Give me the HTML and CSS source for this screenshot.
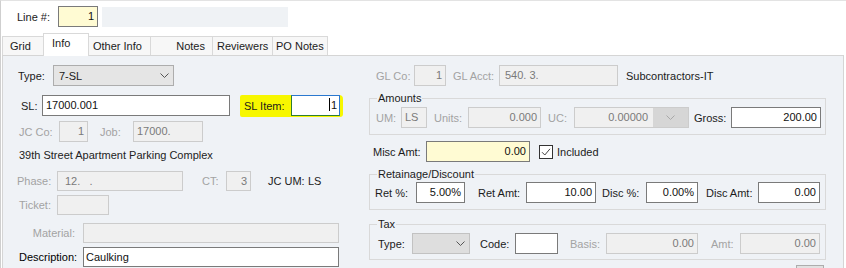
FILE: index.html
```html
<!DOCTYPE html>
<html lang="en">
<head>
    <meta charset="UTF-8">
    <title>SL Line - Info</title>
    <link rel="stylesheet" href="styles.css">
</head>
<body>
<div class="window">
    <div class="topbar">
        <span class="lbl l-line">Line #:</span>
        <div class="box yellow num b-line">1</div>
        <div class="line-desc"></div>
    </div>

    <div class="tabs">
        <div class="tab t-grid">Grid</div>
        <div class="tab active t-info">Info</div>
        <div class="tab t-other">Other Info</div>
        <div class="tab t-notes">Notes</div>
        <div class="tab t-rev">Reviewers</div>
        <div class="tab t-po">PO Notes</div>
    </div>

    <div class="panel">
        <div class="col-left">
            <div class="row r-type">
                <span class="lbl l-type">Type:</span>
                <div class="select s-type">
                    <span>7-SL</span>
                    <svg width="9" height="5" viewBox="0 0 9 5"><path d="M0.5 0.5 L4.5 4.5 L8.5 0.5" fill="none" stroke="#555" stroke-width="1"/></svg>
                </div>
            </div>
            <div class="row r-sl">
                <span class="lbl l-sl">SL:</span>
                <div class="box b-sl">17000.001</div>
                <div class="highlight">
                    <span class="lbl l-slitem">SL Item:</span>
                    <div class="box num focus b-slitem"><span class="caret"></span>1</div>
                </div>
            </div>
            <div class="row r-jc">
                <span class="lbl off l-jcco">JC Co:</span>
                <div class="box off num b-jcco">1</div>
                <span class="lbl off l-job">Job:</span>
                <div class="box off b-job">17000.</div>
            </div>
            <div class="row r-proj">39th Street Apartment Parking Complex</div>
            <div class="row r-phase">
                <span class="lbl off l-phase">Phase:</span>
                <div class="box off b-phase">12.&nbsp;&nbsp;&nbsp;.</div>
                <span class="lbl off l-ct">CT:</span>
                <div class="box off num b-ct">3</div>
                <span class="lbl l-jcum">JC UM:</span>
                <span>LS</span>
            </div>
            <div class="row r-ticket">
                <span class="lbl off l-ticket">Ticket:</span>
                <div class="box off b-ticket"></div>
            </div>
            <div class="row r-mat">
                <span class="lbl off l-mat">Material:</span>
                <div class="box off b-wide"></div>
            </div>
            <div class="row r-desc">
                <span class="lbl l-desc">Description:</span>
                <div class="box b-wide">Caulking</div>
            </div>
        </div>

        <div class="col-right">
            <div class="row r-gl">
                <span class="lbl off l-glco">GL Co:</span>
                <div class="box off num b-glco">1</div>
                <span class="lbl off l-glacct">GL Acct:</span>
                <div class="box off b-glacct">540. 3.</div>
                <span class="gl-desc">Subcontractors-IT</span>
            </div>

            <fieldset class="group g-amounts">
                <legend>Amounts</legend>
                <div class="row">
                    <span class="lbl off l-um">UM:</span>
                    <div class="box off b-um">LS</div>
                    <span class="lbl off l-units">Units:</span>
                    <div class="box off num b-units">0.000</div>
                    <span class="lbl off l-uc">UC:</span>
                    <div class="combo off b-uc">
                        <span class="combo-val">0.00000</span>
                        <span class="combo-btn">
                            <svg width="9" height="5" viewBox="0 0 9 5"><path d="M0.5 0.5 L4.5 4.5 L8.5 0.5" fill="none" stroke="#a8a8a8" stroke-width="1"/></svg>
                        </span>
                    </div>
                    <span class="lbl l-gross">Gross:</span>
                    <div class="box num b-gross">200.00</div>
                </div>
            </fieldset>

            <div class="row r-misc">
                <span class="lbl l-misc">Misc Amt:</span>
                <div class="box yellow num b-misc">0.00</div>
                <span class="check">
                    <svg width="14" height="14" viewBox="0 0 14 14"><rect x="0.5" y="0.5" width="13" height="13" fill="#fff" stroke="#333"/><path d="M3 7.2 L5.8 10 L11 3.8" fill="none" stroke="#444" stroke-width="1"/></svg>
                </span>
                <span class="check-text">Included</span>
            </div>

            <fieldset class="group g-ret">
                <legend>Retainage/Discount</legend>
                <div class="row">
                    <span class="lbl l-retpct">Ret %:</span>
                    <div class="box num b-retpct">5.00%</div>
                    <span class="lbl l-retamt">Ret Amt:</span>
                    <div class="box num b-retamt">10.00</div>
                    <span class="lbl l-discpct">Disc %:</span>
                    <div class="box num b-discpct">0.00%</div>
                    <span class="lbl l-discamt">Disc Amt:</span>
                    <div class="box num b-discamt">0.00</div>
                </div>
            </fieldset>

            <fieldset class="group g-tax">
                <legend>Tax</legend>
                <div class="row">
                    <span class="lbl l-taxtype">Type:</span>
                    <div class="select s-tax">
                        <span></span>
                        <svg width="9" height="5" viewBox="0 0 9 5"><path d="M0.5 0.5 L4.5 4.5 L8.5 0.5" fill="none" stroke="#555" stroke-width="1"/></svg>
                    </div>
                    <span class="lbl l-code">Code:</span>
                    <div class="box b-code"></div>
                    <span class="lbl off l-basis">Basis:</span>
                    <div class="box off num b-basis">0.00</div>
                    <span class="lbl off l-amt">Amt:</span>
                    <div class="box off num b-amt">0.00</div>
                </div>
            </fieldset>

            <div class="row r-more">
                <div class="more-btn"></div>
            </div>
        </div>
    </div>
</div>
</body>
</html>
```

FILE: styles.css
```css
body {
    margin: 0;
    background-color: #fff;
    font-family: 'Liberation Sans', Arial, sans-serif;
    font-size: 11px;
    color: #1b1b1b;
    width: 846px;
    height: 268px;
    overflow: hidden;
}
.window {
    border-left: 1px solid #cfcfcf;
    border-top: 1px solid #e3e3e3;
    height: 267px;
    overflow: hidden;
}

/* top line */
.topbar {
    display: flex;
    align-items: center;
    padding: 5px 0 6px 16px;
}
.line-desc {
    width: 186px;
    height: 20px;
    margin-left: 4px;
    background-color: #eff2f5;
}

/* tabs */
.tabs {
    display: flex;
    align-items: flex-end;
    height: 22px;
    margin-left: 1px;
    position: relative;
    z-index: 1;
}
.tab {
    box-sizing: border-box;
    height: 19px;
    line-height: 18px;
    background-color: #f7f7f7;
    border-top: 1px solid #d9d9d9;
    border-right: 1px solid #d9d9d9;
    white-space: nowrap;
}
.tab.active {
    height: 23px;
    margin-bottom: -1px;
    line-height: 19px;
    background-color: #fff;
    border-left: 1px solid #d9d9d9;
    margin-left: -1px;
}
.t-grid { width: 42px; padding-left: 7px; border-left: 1px solid #d9d9d9; }
.t-info { width: 46px; padding-left: 8px; }
.t-other { width: 62px; padding-left: 4px; }
.t-notes { width: 62px; padding-right: 7px; text-align: right; }
.t-rev { width: 60px; padding-left: 4px; }
.t-po { width: 55px; padding-left: 3px; }

/* main panel */
.panel {
    box-sizing: border-box;
    display: flex;
    width: 842px;
    height: 213px;
    margin-left: 1px;
    padding-top: 9px;
    background-color: #eff2f6;
    border: 1px solid #d5d5d5;
    border-bottom: none;
}
.col-left {
    box-sizing: border-box;
    width: 366px;
    padding-left: 14px;
}
.col-right {
    width: 457px;
}

.row {
    display: flex;
    align-items: center;
    height: 21px;
    white-space: nowrap;
}
.lbl {
    box-sizing: border-box;
    flex: none;
    white-space: nowrap;
}
.lbl.off {
    color: #a3a3a3;
}

/* fields */
.box {
    box-sizing: border-box;
    flex: none;
    height: 21px;
    line-height: 19px;
    padding: 0 3px;
    background-color: #fff;
    border: 1px solid #7a7a7a;
    color: #111;
    overflow: hidden;
    white-space: nowrap;
}
.box.num {
    text-align: right;
}
.box.off {
    background-color: #f0f0f0;
    border-color: #cccccc;
    color: #7a7a7a;
}
.box.yellow {
    background-color: #fffbd3;
}
.box.focus {
    border-color: #2a78cf #2a78cf #2e7d32 #2e7d32;
    padding-right: 2px;
}
.caret {
    display: inline-block;
    width: 1px;
    height: 13px;
    margin-right: 1px;
    vertical-align: -2px;
    background-color: #000;
}
.select {
    box-sizing: border-box;
    flex: none;
    display: flex;
    align-items: center;
    justify-content: space-between;
    height: 21px;
    padding: 0 4px 0 5px;
    background-color: #e5e5e5;
    border: 1px solid #adadad;
}
.combo {
    box-sizing: border-box;
    flex: none;
    display: flex;
    height: 21px;
    background-color: #f0f0f0;
    border: 1px solid #cccccc;
    color: #7a7a7a;
}
.combo-val {
    flex: 1;
    line-height: 19px;
    text-align: right;
    padding-right: 5px;
}
.combo-btn {
    display: flex;
    align-items: center;
    justify-content: center;
    width: 35px;
    background-color: #d6d6d6;
}

/* left column */
.b-line { width: 40px; }
.l-line { width: 41px; }
.l-type { width: 36px; padding-left: 1px; }
.s-type { width: 121px; }
.r-sl { margin-top: 9px; }
.l-sl { width: 25px; padding-left: 4px; }
.b-sl { width: 188px; }
.highlight {
    display: flex;
    align-items: center;
    width: 103px;
    height: 22px;
    margin-left: 10px;
    padding-left: 4px;
    box-sizing: border-box;
    background-color: #f7f700;
    border-radius: 2px 4px 3px 2px;
}
.l-slitem { width: 47px; }
.b-slitem { width: 49px; }
.r-jc { margin-top: 5px; }
.l-jcco { width: 42px; padding-left: 2px; }
.b-jcco { width: 29px; }
.l-job { width: 33px; margin-left: 12px; }
.b-job { width: 70px; text-align: left; }
.r-proj { margin-top: 5px; height: 16px; padding-left: 2px; color: #222; }
.r-phase { margin-top: 8px; height: 20px; }
.r-phase .box { height: 20px; }
.l-phase { width: 40px; }
.b-phase { width: 126px; padding-left: 7px; }
.l-ct { width: 24px; margin-left: 19px; }
.b-ct { width: 25px; }
.l-jcum { width: 40px; margin-left: 17px; }
.r-ticket { margin-top: 4px; height: 20px; }
.r-ticket .box { height: 20px; }
.l-ticket { width: 40px; padding-left: 2px; }
.b-ticket { width: 52px; }
.r-mat { margin-top: 8px; height: 20px; }
.r-desc { margin-top: 4px; height: 20px; }
.r-mat .box, .r-desc .box { height: 20px; }
.l-mat { width: 66px; padding-right: 8px; text-align: right; }
.l-desc { width: 66px; padding-left: 2px; color: #000; }
.b-wide { width: 256px; padding-left: 2px; }

/* right column */
.l-glco { width: 45px; padding-left: 7px; }
.b-glco { width: 32px; }
.l-glacct { width: 46px; margin-left: 7px; }
.b-glacct { width: 119px; padding-left: 5px; }
.gl-desc { margin-left: 8px; }

.group {
    margin: 0;
    padding: 0;
    border: 1px solid #d9d9d9;
    min-width: 0;
}
.group legend {
    margin-left: 7px;
    padding: 0 1px;
    line-height: 14px;
    color: #1b1b1b;
}
.g-amounts { margin-top: 5px; padding: 2px 0 6px; }
.g-ret { margin-top: 5px; padding: 1px 0 6px; }
.g-tax { margin-top: 7px; padding: 2px 0 5px; }

.l-um { width: 31px; padding-left: 6px; }
.b-um { width: 26px; padding-left: 3px; }
.l-units { width: 34px; margin-left: 7px; }
.b-units { width: 73px; }
.l-uc { width: 26px; margin-left: 7px; }
.b-uc { width: 115px; }
.l-gross { width: 37px; margin-left: 5px; }
.b-gross { width: 90px; }

.r-misc { margin-top: 6px; }
.l-misc { width: 57px; padding-left: 4px; }
.b-misc { width: 104px; }
.check { display: flex; margin-left: 9px; }
.check-text { margin-left: 4px; }

.l-retpct { width: 46px; padding-left: 5px; }
.b-retpct { width: 49px; }
.l-retamt { width: 48px; margin-left: 13px; }
.b-retamt { width: 70px; }
.l-discpct { width: 44px; margin-left: 6px; }
.b-discpct { width: 52px; }
.l-discamt { width: 52px; margin-left: 8px; }
.b-discamt { width: 62px; }

.l-taxtype { width: 42px; padding-left: 8px; }
.s-tax {
    width: 58px;
    background-color: #dedede;
    border-color: #c2c2c2;
}
.l-code { width: 35px; margin-left: 10px; }
.b-code { width: 43px; }
.l-basis { width: 36px; margin-left: 12px; }
.b-basis { width: 92px; }
.l-amt { width: 29px; margin-left: 13px; }
.b-amt { width: 80px; }

.r-more {
    justify-content: flex-end;
    margin-top: 5px;
    padding-right: 2px;
}
.more-btn {
    width: 28px;
    height: 14px;
    align-self: flex-start;
    box-sizing: border-box;
    background-color: #e1e1e1;
    border: 1px solid #adadad;
}
```
